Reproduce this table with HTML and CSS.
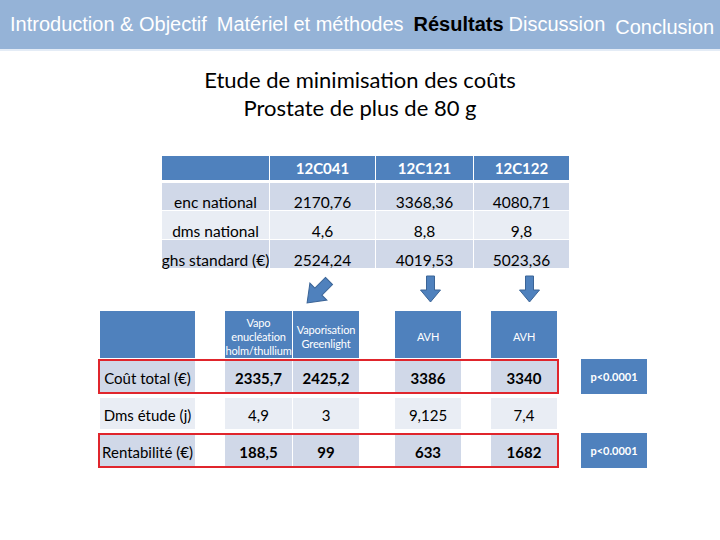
FILE: index.html
```html
<!DOCTYPE html>
<html lang="fr">
<head>
<meta charset="utf-8">
<title>Résultats</title>
<link rel="stylesheet" href="styles.css">
</head>
<body>
<header class="nav">
  <span class="nav-item">Introduction &amp; Objectif</span>
  <span class="nav-item">Matériel et méthodes</span>
  <span class="nav-item active">Résultats</span>
  <span class="nav-item">Discussion</span>
  <span class="nav-item low">Conclusion</span>
</header>

<h1 class="title">Etude de minimisation des coûts<br>Prostate de plus de 80 g</h1>

<div class="ghs">
  <div class="h"></div><div class="h">12C041</div><div class="h">12C121</div><div class="h">12C122</div>
  <div class="c dark">enc national</div><div class="c dark">2170,76</div><div class="c dark">3368,36</div><div class="c dark">4080,71</div>
  <div class="c light">dms national</div><div class="c light">4,6</div><div class="c light">8,8</div><div class="c light">9,8</div>
  <div class="c dark">ghs standard (€)</div><div class="c dark">2524,24</div><div class="c dark">4019,53</div><div class="c dark">5023,36</div>
</div>

<svg class="arrows" width="720" height="43" viewBox="0 270 720 43">
  <g fill="#4f81bd" stroke="#3b6496" stroke-width="1">
    <polygon transform="translate(329 283) rotate(45)" points="-5,0 5,0 5,15 12,15 0,31 -12,15 -5,15"/>
    <polygon transform="translate(430.5 278)" points="-4,0 4,0 4,14 10,14 0,26 -10,14 -4,14"/>
    <polygon transform="translate(529.5 278)" points="-4,0 4,0 4,14 10,14 0,26 -10,14 -4,14"/>
  </g>
</svg>

<div class="study">
  <div class="row head">
    <div class="cell col1 hd"></div>
    <div class="cell col3 hd small">Vapo<br>enucléation<br>holm/thullium</div>
    <div class="cell col5 hd small">Vaporisation<br>Greenlight</div>
    <div class="cell col7 hd small">AVH</div>
    <div class="cell col9 hd small">AVH</div>
  </div>

  <div class="line">
    <div class="row boxed">
      <div class="cell col1 dark lbl">Coût total (€)</div>
      <div class="cell col3 dark b">2335,7</div>
      <div class="cell col5 dark b">2425,2</div>
      <div class="cell col7 dark b">3386</div>
      <div class="cell col9 dark b">3340</div>
    </div>
    <div class="pval">p&lt;0.0001</div>
  </div>

  <div class="line">
    <div class="row">
      <div class="cell col1 light lbl">Dms étude (j)</div>
      <div class="cell col3 light">4,9</div>
      <div class="cell col5 light">3</div>
      <div class="cell col7 light">9,125</div>
      <div class="cell col9 light">7,4</div>
    </div>
  </div>

  <div class="line">
    <div class="row boxed">
      <div class="cell col1 dark lbl">Rentabilité (€)</div>
      <div class="cell col3 dark b">188,5</div>
      <div class="cell col5 dark b">99</div>
      <div class="cell col7 dark b">633</div>
      <div class="cell col9 dark b">1682</div>
    </div>
    <div class="pval">p&lt;0.0001</div>
  </div>
</div>
</body>
</html>
```

FILE: styles.css
```css
html, body {
  margin: 0;
  padding: 0;
  background: #ffffff;
}
body {
  width: 720px;
  height: 540px;
  overflow: hidden;
  font-family: "Lato", "Open Sans", sans-serif;
  color: #000;
}

.nav {
  height: 49px;
  background: #95b3d7;
  border-bottom: 2px solid #e4ecf6;
  display: flex;
  align-items: center;
  padding-left: 10px;
  font-family: "Liberation Sans", Arial, sans-serif;
  font-size: 20px;
  color: #ffffff;
  box-sizing: content-box;
}
.nav-item { margin-right: 10px; white-space: nowrap; }
.nav-item.active { color: #000; font-weight: bold; margin-right: 5px; }
.nav-item.low { padding-top: 5px; margin-right: 0; }

.title {
  margin: 15px 0 0;
  font-weight: normal;
  font-size: 22px;
  line-height: 28px;
  text-align: center;
}

.ghs {
  margin: 34px 0 0 162px;
  width: 408px;
  display: grid;
  grid-template-columns: 107px 105px 97px 95px;
  grid-template-rows: 26px 27px 28px 28px;
  column-gap: 1px;
  row-gap: 1px;
  background: #ffffff;
  font-size: 15.5px;
}
.ghs .h {
  background: #4f81bd;
  color: #fff;
  font-weight: bold;
  font-size: 15px;
  display: flex;
  align-items: center;
  justify-content: center;
  margin-bottom: 2px;
}
.ghs .c {
  display: flex;
  align-items: flex-end;
  justify-content: center;
  line-height: 15px;
  white-space: nowrap;
}

.dark { background: #d0d8e8; }
.light { background: #e9edf4; }

.arrows { display: block; }

.study {
  margin-left: 98px;
  display: flex;
  flex-direction: column;
  gap: 2px;
}
.row {
  display: grid;
  grid-template-columns: 95px 30px 67px 1px 66px 36px 66px 30px 66px;
  height: 31px;
  border: 2px solid transparent;
  box-sizing: content-box;
}
.row.head {
  height: 43px;
  border: none;
  margin-left: 2px;
  margin-bottom: 3px;
}
.row.boxed { border-color: #e0252c; }
.line {
  display: flex;
  align-items: center;
}
.cell {
  display: flex;
  align-items: center;
  justify-content: center;
  text-align: center;
  font-size: 15px;
  padding-top: 2px;
  white-space: nowrap;
}
.col1 { grid-column: 1; }
.col3 { grid-column: 3; }
.col5 { grid-column: 5; }
.col7 { grid-column: 7; }
.col9 { grid-column: 9; }
.hd { background: #4f81bd; color: #fff; padding-top: 0; }
.small { font-size: 11px; line-height: 14px; letter-spacing: -0.15px; padding-top: 5px; }
.b { font-weight: bold; }
.lbl { font-size: 15px; }

.pval {
  margin-left: 22px;
  width: 66px;
  height: 35px;
  background: #4f81bd;
  color: #fff;
  font-weight: bold;
  font-size: 11px;
  display: flex;
  align-items: center;
  justify-content: center;
}
```
